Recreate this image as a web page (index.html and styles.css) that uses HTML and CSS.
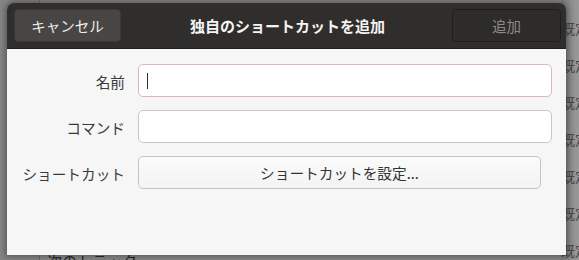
FILE: index.html
```html
<!DOCTYPE html>
<html lang="ja">
<head>
<meta charset="utf-8">
<link rel="stylesheet" href="styles.css">
</head>
<body>
<div class="backdrop">
  <div class="bg-left"></div>
  <div class="bg-main">
    <div class="bg-bottom">次のトラック</div>
  </div>
  <div class="bg-right">
    <span>既定</span><span>既定</span><span>既定</span><span>既定</span><span>既定</span><span>既定</span><span>既定</span>
  </div>
</div>
<div class="dialog">
  <div class="header">
    <button class="hbtn cancel">キャンセル</button>
    <div class="title">独自のショートカットを追加</div>
    <button class="hbtn add">追加</button>
  </div>
  <div class="body">
    <div class="label">名前</div>
    <div class="entry focus"><span class="caret"></span></div>
    <div class="label">コマンド</div>
    <div class="entry"></div>
    <div class="label">ショートカット</div>
    <button class="setbtn">ショートカットを設定...</button>
  </div>
</div>
</body>
</html>
```
FILE: styles.css
```css
* { box-sizing: border-box; }
html, body { margin: 0; padding: 0; }
body {
  width: 579px;
  height: 260px;
  overflow: hidden;
  position: relative;
  font-family: "Noto Sans CJK JP", "Noto Sans", sans-serif;
  background: #8b8b8b;
}
.backdrop {
  display: flex;
  width: 579px;
  height: 260px;
}
.bg-left {
  width: 40px;
  border-right: 1px solid #6e6e6e;
  background: #868686;
}
.bg-main {
  flex: 1;
  display: flex;
  flex-direction: column;
  justify-content: flex-end;
  padding-left: 7px;
  background: #8a8a8a;
}
.bg-bottom {
  font-size: 15px;
  color: #2a2a2a;
  line-height: 15px;
  margin-bottom: -8px;
}
.bg-right {
  width: 18px;
  display: flex;
  flex-direction: column;
  gap: 17px;
  padding-top: 18px;
  overflow: hidden;
  white-space: nowrap;
  background: linear-gradient(to right, #7d7d7d, #9a9a9a);
  font-size: 14px;
  line-height: 20px;
  color: #4a4a4a;
}
.dialog {
  position: absolute;
  left: 7px;
  top: 3px;
  width: 559px;
  height: 252px;
  border-radius: 7px 7px 0 0;
  overflow: hidden;
  box-shadow: 0 0 6px 2px rgba(0,0,0,0.35);
  display: flex;
  flex-direction: column;
}
.header {
  height: 46px;
  background: #302e2d;
  display: flex;
  align-items: center;
  justify-content: space-between;
  padding: 0 5px 0 7px;
  border-bottom: 1px solid #1e1e1e;
}
.hbtn {
  height: 33px;
  border-radius: 4px;
  font-family: inherit;
  font-size: 14.5px;
  padding: 0;
  margin-top: 0;
}
.cancel {
  width: 107px;
  background: #474644;
  border: 1px solid #3a3937;
  color: #eeeeec;
}
.add {
  width: 109px;
  background: #2d2c2b;
  border: 1px solid #1f1e1d;
  color: #8b8a88;
}
.title {
  color: #f4f4f2;
  font-weight: bold;
  font-size: 15px;
  margin-left: 2px;
}
.body {
  flex: 1;
  background: #f6f6f6;
  display: grid;
  grid-template-columns: 118px 1fr;
  grid-auto-rows: 33px;
  column-gap: 13px;
  row-gap: 13px;
  padding: 15px 14px 0 0;
  align-content: start;
}
.label {
  text-align: right;
  font-size: 14.67px;
  color: #3a3a3a;
  align-self: center;
  padding-top: 1px;
}
.entry {
  background: #ffffff;
  border: 1px solid #c9c7c5;
  border-radius: 5px;
  display: flex;
  align-items: center;
  padding-left: 8px;
}
.entry.focus {
  border-color: #d9bab4;
}
.caret {
  width: 1px;
  height: 16px;
  background: #2e2e2e;
}
.setbtn {
  margin-right: 11px;
  background: linear-gradient(#fbfbfb, #f3f3f3);
  border: 1px solid #c6c4c2;
  border-radius: 5px;
  font-family: inherit;
  font-size: 14.67px;
  color: #333333;
  padding: 0;
}
```
